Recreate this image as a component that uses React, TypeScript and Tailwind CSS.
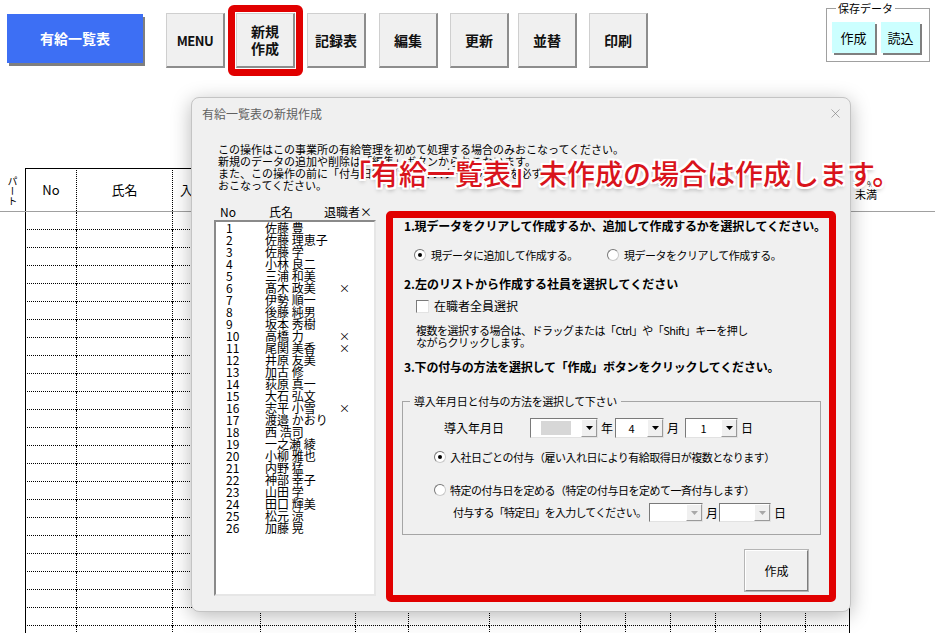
import { X } from 'lucide-react'

const employees: [number, string, boolean][] = [
  [1, '佐藤 豊', false],
  [2, '佐藤 理恵子', false],
  [3, '佐藤 学', false],
  [4, '小林 良二', false],
  [5, '三浦 和美', false],
  [6, '髙木 政美', true],
  [7, '伊勢 順一', false],
  [8, '後藤 純男', false],
  [9, '坂本 秀樹', false],
  [10, '高橋 力', true],
  [11, '尾関 美香', true],
  [12, '井原 友美', false],
  [13, '加古 修', false],
  [14, '荻原 真一', false],
  [15, '大石 弘文', false],
  [16, '志平 小雪', true],
  [17, '渡邉 かおり', false],
  [18, '西 浩司', false],
  [19, '一之瀬 綾', false],
  [20, '小柳 雅也', false],
  [21, '内野 猛', false],
  [22, '神部 幸子', false],
  [23, '山田 学', false],
  [24, '田口 輝美', false],
  [25, '松元 涼', false],
  [26, '加藤 晃', false],
]

const sheetCols =
  'grid grid-cols-[25px_51px_96px_88px_95px_53px_81px_91px_45px_45px_45px_45px_45px_45px_1fr]'

const bodyCell = [
  '',
  'border-l border-b border-black [border-bottom-style:dotted]',
  'border-l border-b border-black border-dotted',
  'border-l border-b border-black border-dotted',
  'border-l border-b border-black border-dotted',
  'border-l border-b border-black border-dotted',
  'border-l border-b border-black border-dotted',
  'border-l border-b border-black border-dotted',
  'border-l border-b border-black border-dotted',
  'border-l border-b border-black border-dotted',
  'border-l border-b border-black border-dotted',
  'border-l border-b border-black border-dotted',
  'border-l border-b border-black border-dotted',
  'border-l border-r border-b border-black border-dotted [border-right-style:solid]',
  '',
]

function ToolButton({ children }: { children: React.ReactNode }) {
  return (
    <div className="w-[59px] h-[55px] flex items-center justify-center text-center bg-[#f0f0f0] border-l border-t border-[#cfcfcf] border-r-2 border-b-2 border-r-[#8d8d8d] border-b-[#8d8d8d] text-[14px] leading-[17px] font-bold text-[#111]">
      {children}
    </div>
  )
}

function Radio({ checked }: { checked?: boolean }) {
  return (
    <span className="inline-flex w-[12px] h-[12px] shrink-0 items-center justify-center rounded-full bg-white border border-[#c9c9c9] border-t-[#777] border-l-[#777]">
      {checked && <span className="w-[4px] h-[4px] rounded-full bg-black" />}
    </span>
  )
}

function Arrow({ disabled }: { disabled?: boolean }) {
  return (
    <span className="w-[16px] h-full shrink-0 flex items-center justify-center bg-[#f0f0f0] border-l border-t border-white border-r border-b border-r-[#9a9a9a] border-b-[#9a9a9a]">
      <svg width="7" height="4" viewBox="0 0 7 4">
        <path d="M0 0h7L3.5 4z" fill={disabled ? '#a8a8a8' : '#000'} />
      </svg>
    </span>
  )
}

function Combo({ className, value, shade, disabled }: { className: string; value?: string; shade?: boolean; disabled?: boolean }) {
  return (
    <div className={`${className} flex bg-white border border-t-[#7a7a7a] border-l-[#7a7a7a] border-r-[#e2e2e2] border-b-[#e2e2e2]`}>
      <div className="flex-1 flex items-center justify-center text-[11px]">
        {shade && <span className="w-[30px] h-[14px] bg-[#d7d7d7]" />}
        {value}
      </div>
      <Arrow disabled={disabled} />
    </div>
  )
}

function Sheet() {
  return (
    <div>
      <div className="border-b border-[#a0a0a0]">
        <div className={`${sheetCols} h-[43px]`}>
          <div className="flex items-center justify-center text-[10px] leading-[11px] [writing-mode:vertical-rl] pt-[2px]">パート</div>
          <div className="border-l border-t border-black flex items-center justify-center text-[13px]">No</div>
          <div className="border-l border-t border-black [border-left-style:dotted] flex items-center justify-center text-[13px]">氏名</div>
          <div className="border-l border-t border-black [border-left-style:dotted] flex items-center pl-[7px] text-[13px]">入社日</div>
          {Array.from({ length: 10 }).map((_, i) => (
            <div key={i} className="border-l border-t border-black [border-left-style:dotted]" />
          ))}
          <div className="flex flex-col pl-[5px] pt-[10px] text-[11px] leading-[11px]">
            <span className="pl-[12px] text-[8px]">%</span>
            <span>未満</span>
          </div>
        </div>
      </div>
      {Array.from({ length: 24 }).map((_, r) => (
        <div key={r} className={`${sheetCols} h-[18px]`}>
          {bodyCell.map((c, i) => (
            <div key={i} className={c} />
          ))}
        </div>
      ))}
    </div>
  )
}

function Dialog() {
  return (
    <div className="absolute left-[191px] top-[97px] w-[660px] h-[515px] rounded-[8px] bg-[#f0f0f0] border border-[#c4c4c4] shadow-[0_4px_20px_rgba(0,0,0,0.28)]">
      <div className="pl-[10px] pt-[8px] h-[24px] text-[12px] leading-[16px] text-[#606060]">有給一覧表の新規作成</div>
      <X size={15} strokeWidth={1} className="absolute right-[7px] top-[8px] text-[#7c7c7c]" />

      <div className="mt-[21px] pl-[26px] text-[11px] leading-[12px]">
        この操作はこの事業所の有給管理を初めて処理する場合のみおこなってください。<br />
        新規のデータの追加や削除は「編集」ボタンからおこないます。<br />
        また、この操作の前に「付与日数」「社員マスター」の登録を必ず<br />
        おこなってください。
      </div>

      <div className="mt-[14px] flex items-start">
        <div className="ml-[22px] w-[162px]">
          <div className="flex h-[14px] items-center text-[12px]">
            <span className="w-[55px] pl-[6px]">No</span>
            <span className="w-[55px]">氏名</span>
            <span>退職者×</span>
          </div>
          <div className="mt-[1px] h-[376px] bg-white border-2 border-t-[#8a8a8a] border-l-[#8a8a8a] border-r-[#e6e6e6] border-b-[#e6e6e6]">
            {employees.map(([no, name, retired]) => (
              <div key={no} className="flex h-[12px] items-center text-[12px] leading-[12px]">
                <span className="w-[49px] pl-[10px]">{no}</span>
                <span className="w-[74px] whitespace-nowrap">{name}</span>
                <span className="text-[11px]">{retired ? '×' : ''}</span>
              </div>
            ))}
          </div>
        </div>

        <div className="ml-[10px] mt-[6px] w-[450px] h-[391px] border-[7px] border-[#e10000] rounded-[5px] flex flex-col text-[11px]">
          <div className="pl-[11px] h-[16px] leading-[16px] text-[12px] font-bold whitespace-nowrap tracking-[-0.2px]">
            1.現データをクリアして作成するか、追加して作成するかを選択してください。
          </div>
          <div className="mt-[13px] h-[16px] flex items-center pl-[21px] tracking-[-0.5px]">
            <div className="w-[193px] flex items-center">
              <Radio checked />
              <span className="ml-[5px]">現データに追加して作成する。</span>
            </div>
            <Radio />
            <span className="ml-[5px]">現データをクリアして作成する。</span>
          </div>
          <div className="mt-[13px] pl-[11px] h-[16px] leading-[16px] text-[12px] font-bold">
            2.左のリストから作成する社員を選択してください
          </div>
          <div className="mt-[6px] h-[16px] flex items-center pl-[23px]">
            <span className="w-[13px] h-[13px] bg-white border border-[#7a7a7a] border-r-[#e3e3e3] border-b-[#e3e3e3]" />
            <span className="ml-[5px] text-[12px]">在職者全員選択</span>
          </div>
          <div className="mt-[10px] pl-[23px] leading-[12px] tracking-[-0.5px]">
            複数を選択する場合は、ドラッグまたは「Ctrl」や「Shift」キーを押し<br />
            ながらクリックします。
          </div>
          <div className="mt-[11px] pl-[11px] h-[16px] leading-[16px] text-[12px] font-bold tracking-[-0.2px]">
            3.下の付与の方法を選択して「作成」ボタンをクリックしてください。
          </div>

          <div className="relative mt-[26px] ml-[9px] w-[419px] h-[134px] border border-[#a5a5a5]">
            <span className="absolute top-[-8px] left-[7px] px-[4px] bg-[#f0f0f0] leading-[14px] tracking-[-0.3px]">
              導入年月日と付与の方法を選択して下さい
            </span>
            <div className="mt-[16px] h-[20px] flex items-center pl-[41px] text-[12px]">
              <span className="w-[86px]">導入年月日</span>
              <Combo className="w-[68px] h-[20px]" shade />
              <span className="ml-[3px]">年</span>
              <Combo className="ml-[2px] w-[49px] h-[20px]" value="4" />
              <span className="ml-[3px]">月</span>
              <Combo className="ml-[6px] w-[53px] h-[20px]" value="1" />
              <span className="ml-[3px]">日</span>
            </div>
            <div className="mt-[11px] h-[16px] flex items-center pl-[31px] tracking-[-0.5px]">
              <Radio checked />
              <span className="ml-[4px]">入社日ごとの付与（雇い入れ日により有給取得日が複数となります）</span>
            </div>
            <div className="mt-[17px] h-[16px] flex items-center pl-[31px] tracking-[-0.5px]">
              <Radio />
              <span className="ml-[4px]">特定の付与日を定める（特定の付与日を定めて一斉付与します）</span>
            </div>
            <div className="mt-[5px] h-[19px] flex items-center pl-[50px]">
              <span className="w-[196px] shrink-0 whitespace-nowrap tracking-[-0.8px]">付与する「特定日」を入力してください。</span>
              <Combo className="w-[54px] h-[19px]" disabled />
              <span className="ml-[3px] text-[12px]">月</span>
              <Combo className="ml-[1px] w-[52px] h-[19px]" disabled />
              <span className="ml-[3px] text-[12px]">日</span>
            </div>
          </div>

          <div className="mt-[15px] ml-[352px] w-[63px] h-[41px] flex items-center justify-center bg-[#f0f0f0] border border-t-white border-l-white border-r-[#7d7d7d] border-b-[#7d7d7d] outline outline-1 outline-[#b5b5b5] text-[12px]">
            作成
          </div>
        </div>
      </div>
    </div>
  )
}

export default function App() {
  return (
    <div className="relative w-[935px] h-[633px] overflow-hidden bg-white text-black font-['Noto_Sans_CJK_JP','Noto_Sans',sans-serif]">
      <div className="flex items-start h-[168px]">
        <div className="ml-[7px] mt-[14px] w-[136px] h-[49px] flex items-center justify-center bg-[#3d6ff4] shadow-[2px_3px_0_#7f7f7f] text-white text-[14px] font-bold">
          有給一覧表
        </div>
        <div className="ml-[23px] mt-[13px]">
          <ToolButton><span className="text-[13px] tracking-[-0.5px]">MENU</span></ToolButton>
        </div>
        <div className="ml-[3px] mt-[5px] p-[1px] border-[7px] border-[#e10000] rounded-[6px]">
          <ToolButton>新規<br />作成</ToolButton>
        </div>
        <div className="ml-[4px] mt-[13px]"><ToolButton>記録表</ToolButton></div>
        <div className="ml-[13px] mt-[13px]"><ToolButton>編集</ToolButton></div>
        <div className="ml-[12px] mt-[13px]"><ToolButton>更新</ToolButton></div>
        <div className="ml-[9px] mt-[13px]"><ToolButton>並替</ToolButton></div>
        <div className="ml-[12px] mt-[13px]"><ToolButton>印刷</ToolButton></div>

        <div className="relative ml-auto mr-[5px] mt-[8px] w-[104px] h-[54px] border border-[#a0a0a0]">
          <span className="absolute top-[-8px] left-[9px] px-[2px] bg-white text-[11px] leading-[14px]">保存データ</span>
          <div className="flex gap-[6px] pl-[5px] pt-[13px]">
            <div className="w-[43px] h-[31px] flex items-center justify-center bg-[#ccffff] shadow-[2px_2px_0_#7f7f7f] text-[13px]">作成</div>
            <div className="w-[39px] h-[31px] flex items-center justify-center bg-[#ccffff] shadow-[2px_2px_0_#7f7f7f] text-[13px]">読込</div>
          </div>
        </div>
      </div>

      <Sheet />
      <Dialog />

      <div className="absolute left-[343px] top-[155px] whitespace-nowrap text-[28px] leading-[36px] font-medium text-[#d9141c] [text-shadow:2px_0_0_#fff,-2px_0_0_#fff,0_2px_0_#fff,0_-2px_0_#fff,2px_2px_0_#fff,-2px_-2px_0_#fff,2px_-2px_0_#fff,-2px_2px_0_#fff,0_3px_4px_rgba(0,0,0,0.35)]">
        「有給一覧表」未作成の場合は作成します。
      </div>
    </div>
  )
}
